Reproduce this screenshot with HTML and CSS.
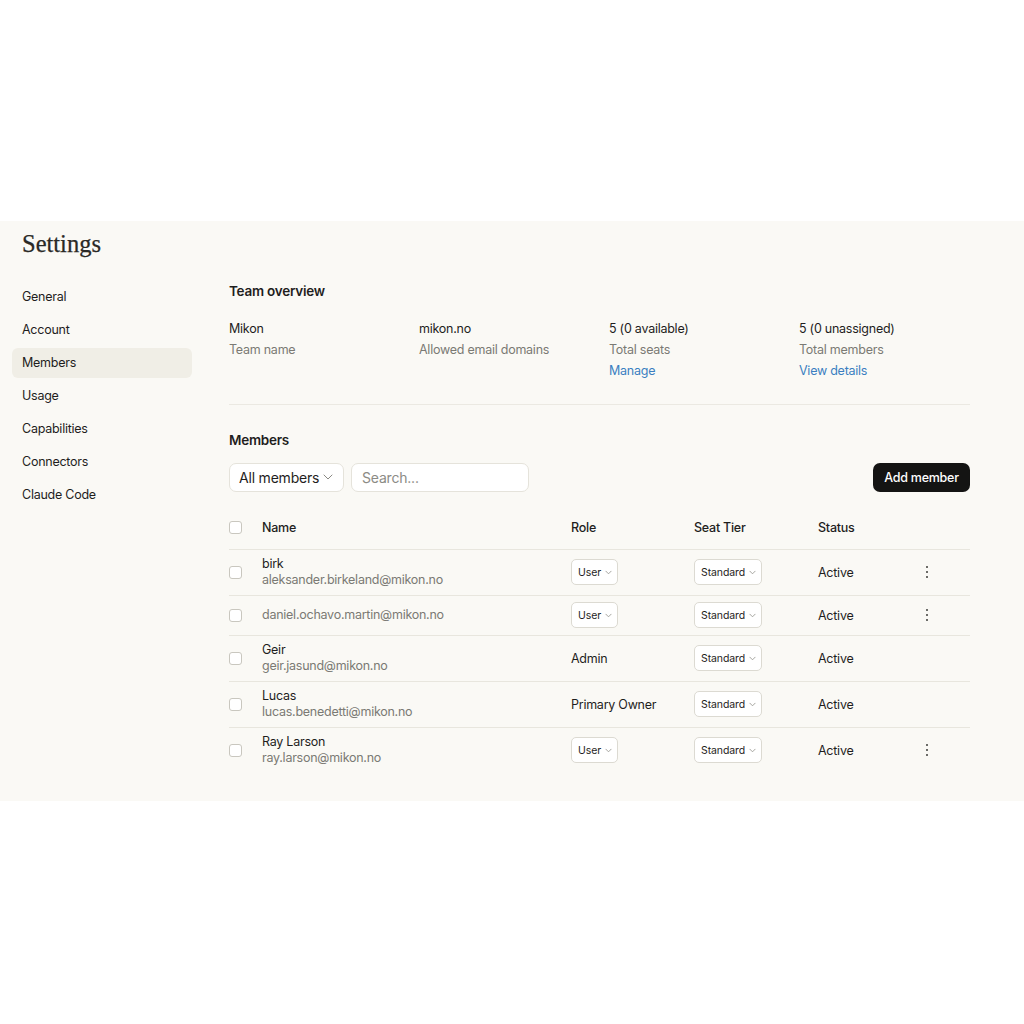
FILE: index.html
```html
<!DOCTYPE html>
<html lang="en">
<head>
<meta charset="utf-8">
<title>Settings</title>
<link rel="stylesheet" href="styles.css">
</head>
<body>
<div class="panel">
  <h1 class="title">Settings</h1>
  <div class="layout">
    <nav class="sidebar">
      <a class="nav-item">General</a>
      <a class="nav-item">Account</a>
      <a class="nav-item active">Members</a>
      <a class="nav-item">Usage</a>
      <a class="nav-item">Capabilities</a>
      <a class="nav-item">Connectors</a>
      <a class="nav-item">Claude Code</a>
    </nav>
    <main class="main">
      <section class="overview">
        <h2 class="heading">Team overview</h2>
        <div class="stats">
          <div class="stat">
            <div class="stat-value">Mikon</div>
            <div class="stat-label">Team name</div>
          </div>
          <div class="stat">
            <div class="stat-value">mikon.no</div>
            <div class="stat-label">Allowed email domains</div>
          </div>
          <div class="stat">
            <div class="stat-value">5 (0 available)</div>
            <div class="stat-label">Total seats</div>
            <a class="stat-link">Manage</a>
          </div>
          <div class="stat">
            <div class="stat-value">5 (0 unassigned)</div>
            <div class="stat-label">Total members</div>
            <a class="stat-link">View details</a>
          </div>
        </div>
      </section>

      <section class="members">
        <h2 class="heading">Members</h2>
        <div class="toolbar">
          <div class="filter">
            <span>All members</span>
            <svg class="chev-lg" viewBox="0 0 10 6" width="10" height="6"><path d="M1 1l4 4 4-4" fill="none" stroke="#8a8983" stroke-width="1" stroke-linecap="round" stroke-linejoin="round"/></svg>
          </div>
          <div class="search">Search...</div>
          <div class="spacer"></div>
          <button class="add-btn">Add member</button>
        </div>

        <div class="table">
          <div class="row thead">
            <span class="check"></span>
            <span>Name</span>
            <span>Role</span>
            <span>Seat Tier</span>
            <span>Status</span>
            <span></span>
          </div>

          <div class="row">
            <span class="check"></span>
            <div class="person"><div class="pname">birk</div><div class="pemail">aleksander.birkeland@mikon.no</div></div>
            <div><span class="mini-select">User<svg viewBox="0 0 8 5" width="7" height="5"><path d="M1 1l3 3 3-3" fill="none" stroke="#9a9992" stroke-width="1" stroke-linecap="round" stroke-linejoin="round"/></svg></span></div>
            <div><span class="mini-select">Standard<svg viewBox="0 0 8 5" width="7" height="5"><path d="M1 1l3 3 3-3" fill="none" stroke="#9a9992" stroke-width="1" stroke-linecap="round" stroke-linejoin="round"/></svg></span></div>
            <span class="status">Active</span>
            <span class="kebab"><i></i><i></i><i></i></span>
          </div>

          <div class="row">
            <span class="check"></span>
            <div class="person"><div class="pemail">daniel.ochavo.martin@mikon.no</div></div>
            <div><span class="mini-select">User<svg viewBox="0 0 8 5" width="7" height="5"><path d="M1 1l3 3 3-3" fill="none" stroke="#9a9992" stroke-width="1" stroke-linecap="round" stroke-linejoin="round"/></svg></span></div>
            <div><span class="mini-select">Standard<svg viewBox="0 0 8 5" width="7" height="5"><path d="M1 1l3 3 3-3" fill="none" stroke="#9a9992" stroke-width="1" stroke-linecap="round" stroke-linejoin="round"/></svg></span></div>
            <span class="status">Active</span>
            <span class="kebab"><i></i><i></i><i></i></span>
          </div>

          <div class="row">
            <span class="check"></span>
            <div class="person"><div class="pname">Geir</div><div class="pemail">geir.jasund@mikon.no</div></div>
            <span class="role-text">Admin</span>
            <div><span class="mini-select">Standard<svg viewBox="0 0 8 5" width="7" height="5"><path d="M1 1l3 3 3-3" fill="none" stroke="#9a9992" stroke-width="1" stroke-linecap="round" stroke-linejoin="round"/></svg></span></div>
            <span class="status">Active</span>
            <span></span>
          </div>

          <div class="row">
            <span class="check"></span>
            <div class="person"><div class="pname">Lucas</div><div class="pemail">lucas.benedetti@mikon.no</div></div>
            <span class="role-text">Primary Owner</span>
            <div><span class="mini-select">Standard<svg viewBox="0 0 8 5" width="7" height="5"><path d="M1 1l3 3 3-3" fill="none" stroke="#9a9992" stroke-width="1" stroke-linecap="round" stroke-linejoin="round"/></svg></span></div>
            <span class="status">Active</span>
            <span></span>
          </div>

          <div class="row last">
            <span class="check"></span>
            <div class="person"><div class="pname">Ray Larson</div><div class="pemail">ray.larson@mikon.no</div></div>
            <div><span class="mini-select">User<svg viewBox="0 0 8 5" width="7" height="5"><path d="M1 1l3 3 3-3" fill="none" stroke="#9a9992" stroke-width="1" stroke-linecap="round" stroke-linejoin="round"/></svg></span></div>
            <div><span class="mini-select">Standard<svg viewBox="0 0 8 5" width="7" height="5"><path d="M1 1l3 3 3-3" fill="none" stroke="#9a9992" stroke-width="1" stroke-linecap="round" stroke-linejoin="round"/></svg></span></div>
            <span class="status">Active</span>
            <span class="kebab"><i></i><i></i><i></i></span>
          </div>
        </div>
      </section>
    </main>
  </div>
</div>
</body>
</html>
```

FILE: styles.css
```css
* { box-sizing: border-box; }

html, body {
  margin: 0;
  padding: 0;
  background: #ffffff;
}

body {
  font-family: "Inter", "Noto Sans", sans-serif;
  font-size: 12.5px;
  letter-spacing: -0.25px;
  color: #1f1e1d;
  padding-top: 221px;
  height: 1024px;
}

.panel {
  background: #faf9f5;
  height: 580px;
  padding: 7px 0 0 12px;
}

.title {
  margin: 0 0 0 10px;
  font-family: "Liberation Serif", "DejaVu Serif", serif;
  font-weight: 400;
  font-size: 24.5px;
  line-height: 32px;
  letter-spacing: 0;
  color: #2a2926;
  -webkit-text-stroke: 0.25px #2a2926;
}

.layout {
  display: flex;
  margin-top: 21px;
}

.sidebar {
  width: 180px;
  display: flex;
  flex-direction: column;
  gap: 3px;
  padding-top: 1px;
}

.nav-item {
  display: block;
  height: 30px;
  line-height: 30px;
  padding-left: 10px;
  border-radius: 6px;
  color: #1f1e1d;
}

.nav-item.active {
  background: #f0eee6;
}

.main {
  margin-left: 37px;
  width: 741px;
}

.heading {
  margin: 0;
  font-size: 13.5px;
  line-height: 20px;
  font-weight: 600;
  color: #1f1e1d;
}

.overview {
  border-bottom: 1px solid #ebe9e2;
  padding-bottom: 23px;
}

.stats {
  display: grid;
  grid-template-columns: repeat(4, 190px);
  margin-top: 16.5px;
}

.stat-value,
.stat-label,
.stat-link {
  display: block;
  line-height: 21px;
}

.stat-label {
  color: #7b7a74;
}

.stat-link {
  color: #3b7fc1;
}

.members {
  padding-top: 25px;
}

.toolbar {
  display: flex;
  gap: 7px;
  margin-top: 13px;
  align-items: center;
}

.filter,
.search {
  height: 29px;
  background: #ffffff;
  border: 1px solid #e5e3db;
  border-radius: 7px;
  font-size: 14px;
  letter-spacing: -0.2px;
  display: flex;
  align-items: center;
  white-space: nowrap;
}

.filter {
  width: 115px;
  padding: 0 10px 0 9px;
  justify-content: space-between;
}

.search {
  width: 178px;
  padding: 0 10px;
  color: #8c8b85;
}

.spacer { flex: 1; }

.add-btn {
  height: 29px;
  width: 97px;
  border: 0;
  border-radius: 7px;
  background: #141413;
  color: #ffffff;
  font-family: inherit;
  font-size: 12.5px;
  letter-spacing: -0.25px;
  font-weight: 500;
}

.table {
  margin-top: 18px;
}

.row {
  display: grid;
  grid-template-columns: 33px 309px 123px 124px 100px 1fr;
  align-items: center;
  padding: 6.5px 0;
  border-bottom: 1px solid #e8e6de;
}

.row.last { border-bottom: 0; }

.thead {
  padding: 8px 0 11px;
  font-weight: 500;
  line-height: 20px;
}

.check {
  width: 13px;
  height: 13px;
  border: 1px solid #c9c7bf;
  border-radius: 3px;
  background: #ffffff;
}

.pname {
  line-height: 16px;
}

.pemail {
  line-height: 16px;
  color: #7b7a74;
}

.mini-select {
  display: inline-flex;
  align-items: center;
  gap: 4px;
  height: 26px;
  padding: 0 5px 0 6px;
  background: #ffffff;
  border: 1px solid #dcdad2;
  border-radius: 5px;
  font-size: 10.5px;
  letter-spacing: -0.1px;
}

.kebab {
  display: flex;
  flex-direction: column;
  align-items: center;
  gap: 2.5px;
  width: 18px;
}

.kebab i {
  display: block;
  width: 2.5px;
  height: 2.5px;
  border-radius: 50%;
  background: #3d3c38;
}
```
